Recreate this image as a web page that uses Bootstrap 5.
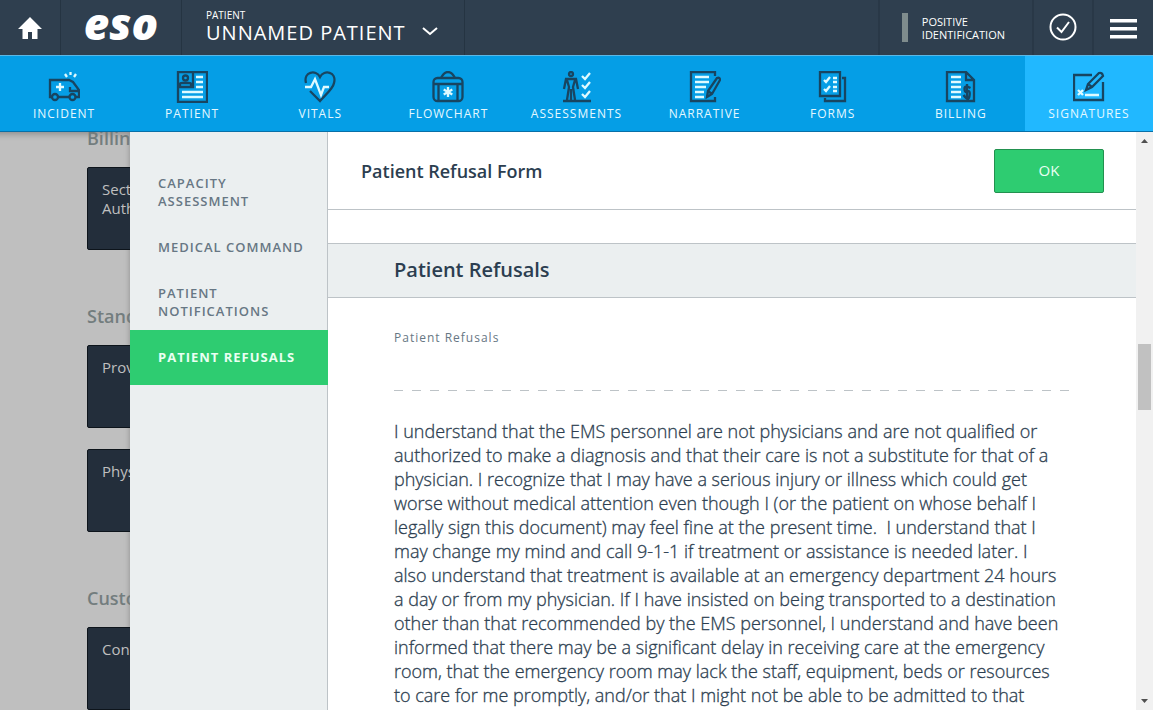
<!DOCTYPE html>
<html lang="en">
<head>
<meta charset="utf-8">
<meta name="viewport" content="width=device-width, initial-scale=1">
<title>Patient Refusal Form</title>
<link rel="stylesheet" href="https://cdn.jsdelivr.net/npm/bootstrap@5.3.0/dist/css/bootstrap.min.css">
<style>
  body { font-family: "Open Sans", "Noto Sans", sans-serif; color: #2c3e50; }
  a, a:hover { text-decoration: none; color: inherit; }
  button { font-family: inherit; }
  .tracked { letter-spacing: 1px; }

  /* top bar */
  .topbar { background: #2f3f4f; color: #fff; height: 55px; }
  .cell { border-right: 1px solid #253442; }
  .cell-end { border-left: 2px solid #293847; }
  .bare { background: none; border-top: 0; border-bottom: 0; color: inherit; padding: 0; }
  .bare.cell { border-left: 0; }
  .bare.cell-end { border-right: 0; }
  .home { width: 61px; }
  .brandmark { width: 121px; font-size: 44px; line-height: 46px; font-style: italic; font-weight: 800; height: 55px; }
  .chart { padding: 8px 26px 0 24px; text-align: left; }
  .chart-kind { font-size: 10px; line-height: 14px; }
  .chart-name { font-size: 20px; line-height: 22px; }
  .ident { font-size: 11px; line-height: 13px; padding: 0 27px 0 22px; text-align: left; }
  .ident-bar { width: 6px; height: 29px; margin-right: 14px; background: #7f8c8d; }
  .icon-cell { width: 60px; padding-bottom: 1px; }
  .menu-cell { width: 61px; padding-bottom: 1px; }

  /* section tabs */
  .tabs { background: #059ee6; border-top: 1px solid #5cb8e6; border-bottom: 1px solid #0870a8; height: 77px; color: #e4f8ff; z-index: 2; }
  .tab { flex: 1 1 0; min-width: 0; padding-top: 15px; font-size: 12px; line-height: 18px; }
  .tab.current { background: #21b8ff; }
  .tab svg { display: block; margin-bottom: 2px; }
  .ink { fill: none; stroke: #184561; stroke-width: 2.3; }
  .lit { fill: none; stroke: #dffaff; stroke-width: 2.3; }

  /* dimmed page under the drawer */
  .under { flex: 0 0 130px; background: #bfbfbf; padding-left: 87px; box-shadow: inset 0 10px 6px -8px #8c8c8c, inset -10px 0 5px -9px #999; }
  .under h2 { font-size: 18px; line-height: 24px; font-weight: 600; color: #737d7e; margin: 54px 0 17px; white-space: nowrap; }
  .under h2:first-child { margin-top: -6px; }
  .tile { width: 240px; height: 83px; background: #232e3b; border: 1px solid #0d141b; border-radius: 2px; color: #bfbfbf; font-size: 15px; line-height: 19px; padding: 12px 14px; text-align: left; }
  .tile + .tile { margin-top: 21px; }

  /* form drawer */
  .sidenav { flex: 0 0 198px; background: #ebeff0; border-right: 1px solid #bdc3c7; padding-top: 24px; font-size: 13px; line-height: 18px; font-weight: 600; color: #677784; }
  .sidenav a { padding: 18px 12px 10px 28px; }
  .sidenav a.current { background: #2ecc71; color: #eafff2; font-weight: 700; margin-right: -1px; padding-bottom: 19px; }
  .form-head { height: 78px; border-bottom: 1px solid #bdc3c7; padding: 0 32px 0 33px; }
  .form-head h1 { font-size: 18px; line-height: 24px; font-weight: 600; }
  .ok { width: 110px; height: 44px; background: #2ecc71; border: 1px solid #22914f; border-radius: 2px; color: #eafff2; font-size: 15px; font-weight: 400; }
  .band { margin-top: 33px; background: #ebeff0; border: solid #bdc3c7; border-width: 1px 0; padding: 14px 66px 15px; }
  .band h2 { font-size: 20px; line-height: 24px; font-weight: 600; }
  .fields { padding: 30px 66px 0; }
  .field-name { font-size: 12px; line-height: 20px; color: #677784; }
  .rule { height: 1px; margin: 42px 0 28px; background: repeating-linear-gradient(90deg, #bdc3c7 0 9px, transparent 9px 18px); }
  .legal { font-size: 18px; line-height: 24px; font-weight: 300; white-space: pre-line; -webkit-text-stroke: .3px #2c3e50; }

  .scroller { flex: 0 0 17px; background: #f1f1f1; }
  .scroller svg { display: block; }
  .thumb { height: 66px; width: 13px; background: #c1c1c1; }
</style>
<script src="https://cdn.jsdelivr.net/npm/bootstrap@5.3.0/dist/js/bootstrap.bundle.min.js"></script>
</head>
<body class="vh-100 d-flex flex-column overflow-hidden">

<header class="topbar d-flex flex-shrink-0">
  <a href="#" class="cell home d-flex align-items-center justify-content-center" aria-label="Home">
    <svg width="24" height="22" viewBox="0 0 24 22"><path fill="#fff" d="M12 0 24 12H19.500V22H14V15H10V22H4.500V12H0Z"/></svg>
  </a>
  <a href="#" class="cell brandmark text-center">eso</a>
  <button class="bare cell chart d-flex">
    <span>
      <span class="chart-kind d-block">PATIENT</span>
      <span class="chart-name tracked d-block">UNNAMED PATIENT</span>
    </span>
    <svg class="ms-3 mt-3" width="16" height="14" viewBox="0 0 16 14"><path fill="none" stroke="#fff" stroke-width="2" d="M1 4 8 10 15 4"/></svg>
  </button>
  <button class="bare cell-end ident ms-auto d-flex align-items-center">
    <span class="ident-bar"></span>
    <span>POSITIVE<br>IDENTIFICATION</span>
  </button>
  <button class="bare cell-end icon-cell" aria-label="Validate">
    <svg width="28" height="28" viewBox="0 0 28 28" fill="none" stroke="#fff" stroke-width="2"><circle cx="14" cy="14" r="12.500"/><path d="M8 14.500 12.500 19 20 9"/></svg>
  </button>
  <button class="bare cell-end menu-cell" aria-label="Menu">
    <svg width="27" height="20" viewBox="0 0 27 20"><path fill="#fff" d="M0 0H27V3.500H0ZM0 8H27V11.500H0ZM0 16H27V19.500H0Z"/></svg>
  </button>
</header>

<nav class="tabs tracked d-flex flex-shrink-0 position-relative">
  <a href="#" class="tab d-flex flex-column align-items-center">
    <svg width="32" height="32" viewBox="0 0 32 32"><g class="ink"><path d="M4 26H2V9H21L25 11 31 19V26H28M10 26H21M22 16V20H30"/><circle cx="7" cy="26" r="3"/><circle cx="24.500" cy="26" r="3"/></g><path class="lit" d="M12 12V20M8 16H16M22.500 1V4M17 3 19 6M28 3 26 6"/></svg>
    INCIDENT
  </a>
  <a href="#" class="tab d-flex flex-column align-items-center">
    <svg width="32" height="32" viewBox="0 0 32 32"><g class="ink"><path d="M2 1H31V31H2ZM2 16H17V1"/><circle cx="9.500" cy="7" r="2.500"/><path d="M4 15V13Q4 12 6.500 12H12.500Q15 12 15 13V15"/></g><path class="lit" d="M20 6H27M20 11H27M20 16H27M6 21H27M6 26H27"/></svg>
    PATIENT
  </a>
  <a href="#" class="tab d-flex flex-column align-items-center">
    <svg width="32" height="32" viewBox="0 0 32 32"><path class="ink" d="M2 12C-1 1 12-2 16 6C20-2 33 1 30 12C29 18 21 24 16 30L6 20"/><path class="lit" d="M1 16H7L11 8L17 24L20 16H25"/></svg>
    VITALS
  </a>
  <a href="#" class="tab d-flex flex-column align-items-center">
    <svg width="32" height="32" viewBox="0 0 32 32"><g class="ink"><rect x="1.500" y="7" width="29" height="23" rx="4"/><path d="M9 7Q12 1 16 1T23 7M2 13H30M6.500 13V30M25.500 13V30"/></g><path class="lit" stroke-width="3" d="M16 16V26M11.700 18.500 20.300 23.500M20.300 18.500 11.700 23.500"/></svg>
    FLOWCHART
  </a>
  <a href="#" class="tab d-flex flex-column align-items-center">
    <svg width="32" height="32" viewBox="0 0 32 32"><g class="ink"><circle cx="11" cy="3" r="2"/><path d="M4 18 6 8H16L18 18M7 9 9 16 7 29M15 9 13 16 15 29M11 18V29M3 30H31"/></g><path class="lit" d="M22 5 25 8 30 2M22 14 25 17 30 11M22 23 25 26 30 20"/></svg>
    ASSESSMENTS
  </a>
  <a href="#" class="tab d-flex flex-column align-items-center">
    <svg width="32" height="32" viewBox="0 0 32 32"><path class="ink" d="M26 5V1H2V30H26V26M18 26 19 20 28 7Q31 6 31 9L23 23ZM19 20 23 23"/><path class="lit" d="M6 6H20M6 11H20M6 16H17M6 21H15M6 26H15"/></svg>
    NARRATIVE
  </a>
  <a href="#" class="tab d-flex flex-column align-items-center">
    <svg width="32" height="32" viewBox="0 0 32 32"><path class="ink" d="M3 1H23V25H3ZM8 27V30H28V7H25"/><path class="lit" d="M7 9 9 11 13 6M7 18 9 20 13 15M16 7H20M16 11H20M16 16H20M16 20H20"/></svg>
    FORMS
  </a>
  <a href="#" class="tab d-flex flex-column align-items-center">
    <svg width="32" height="32" viewBox="0 0 32 32"><path class="ink" d="M2 1H21L29 9V30H2ZM21 1V9H29M25.500 17Q19.500 14 19.500 18T22.500 20.500T24.500 25T18.500 24M22 13V28"/><path class="lit" d="M6 6H16M6 11H16M6 16H16M6 21H16M6 26H16"/></svg>
    BILLING
  </a>
  <a href="#" class="tab current d-flex flex-column align-items-center" aria-current="page">
    <svg width="32" height="32" viewBox="0 0 32 32"><path class="ink" d="M19 4H1V29H30V11M13 19 15 13 26 2Q29 1 30 5L19 16ZM15 13 19 16"/><path class="lit" d="M12 24H26M5 19 10 24M10 19 5 24"/></svg>
    SIGNATURES
  </a>
</nav>

<main class="d-flex flex-grow-1 overflow-hidden">
  <section class="under overflow-hidden" aria-label="Signatures">
    <h2>Billing</h2>
    <button class="tile d-flex align-items-start">Section<br>Authorization</button>
    <h2>Standard</h2>
    <button class="tile d-flex align-items-start">Provider</button>
    <button class="tile d-flex align-items-start">Physician</button>
    <h2>Custom</h2>
    <button class="tile d-flex align-items-start">Consent</button>
  </section>

  <nav class="sidenav tracked d-flex flex-column">
    <a href="#">CAPACITY ASSESSMENT</a>
    <a href="#">MEDICAL COMMAND</a>
    <a href="#">PATIENT NOTIFICATIONS</a>
    <a href="#" class="current" aria-current="page">PATIENT REFUSALS</a>
  </nav>

  <section class="flex-grow-1 bg-white overflow-hidden">
    <div class="form-head d-flex align-items-center justify-content-between">
      <h1 class="m-0">Patient Refusal Form</h1>
      <button class="ok">OK</button>
    </div>
    <div class="band"><h2 class="m-0">Patient Refusals</h2></div>
    <div class="fields">
      <div class="field-name tracked">Patient Refusals</div>
      <div class="rule"></div>
      <p class="legal m-0">I understand that the EMS personnel are not physicians and are not qualified or
authorized to make a diagnosis and that their care is not a substitute for that of a
physician. I recognize that I may have a serious injury or illness which could get
worse without medical attention even though I (or the patient on whose behalf I
legally sign this document) may feel fine at the present time.&nbsp; I understand that I
may change my mind and call 9-1-1 if treatment or assistance is needed later. I
also understand that treatment is available at an emergency department 24 hours
a day or from my physician. If I have insisted on being transported to a destination
other than that recommended by the EMS personnel, I understand and have been
informed that there may be a significant delay in receiving care at the emergency
room, that the emergency room may lack the staff, equipment, beds or resources
to care for me promptly, and/or that I might not be able to be admitted to that</p>
    </div>
  </section>

  <div class="scroller d-flex flex-column align-items-center" aria-hidden="true">
    <svg width="17" height="17"><path fill="#505050" d="M5 11H12L8.500 7Z"/></svg>
    <div style="flex-grow:195"></div>
    <div class="thumb"></div>
    <div style="flex-grow:283"></div>
    <svg width="17" height="17"><path fill="#505050" d="M5 6H12L8.500 10Z"/></svg>
  </div>
</main>
</body>
</html>
